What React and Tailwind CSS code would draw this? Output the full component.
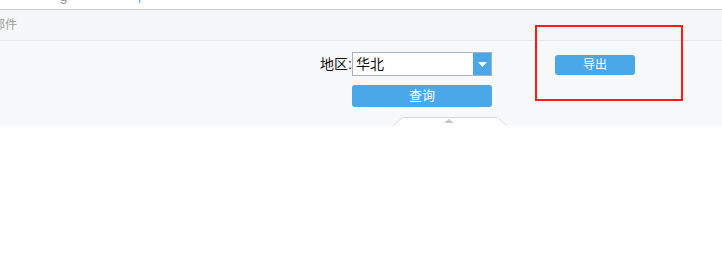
import React from "react";

const FONT = { fontFamily: '"Liberation Sans", "Noto Sans CJK SC", sans-serif' };

function CollapseTab() {
  return (
    <svg width="116" height="9" viewBox="0 0 116 9" className="block">
      <path d="M0.5 9 L10.5 0.5 L105.5 0.5 L115.5 9" fill="#ffffff" stroke="#d9d9d9" />
      <path d="M52 6 L57 2 L62 6 Z" fill="#c8c8c8" />
    </svg>
  );
}

export default function App() {
  return (
    <div className="w-[722px] h-[272px] bg-white relative overflow-hidden text-[14px]" style={FONT}>
      {/* cut-off line above */}
      <div className="h-[9px] overflow-hidden relative border-b border-[#cacaca] box-content">
        <div className="absolute left-[60px] top-[-13px] text-[13px] text-[#888]">g</div>
        <div className="absolute left-[138px] top-[-14px] text-[13px] text-[#4aa8e8]">p</div>
      </div>

      {/* title band */}
      <div className="h-[31px] bg-[#f5f6f8] border-b border-[#e6e7ea] flex items-center">
        <span className="ml-[-7px] text-[12px] text-[#a0a0a0]">邮件</span>
      </div>

      {/* search panel */}
      <div className="h-[85px] bg-[#f7f8fa] flex flex-col">
        <div className="flex pl-[320px] pt-[11px]">
          <div className="flex flex-col w-[172px]">
            <div className="flex items-center h-[24px]">
              <span className="w-[32px] text-[#111]">地区:</span>
              <div className="flex w-[140px] h-[24px] border border-[#aab1c2] bg-white">
                <span className="flex-1 flex items-center pl-[3px] text-[14px] text-[#111]">华北</span>
                <div className="w-[18px] bg-[#4aa8e8] flex items-center justify-center">
                  <svg width="9" height="5" viewBox="0 0 9 5"><path d="M0 0 H9 L4.5 5 Z" fill="#fff" /></svg>
                </div>
              </div>
            </div>
            <button className="ml-[32px] mt-[9px] w-[140px] h-[22px] rounded-[3px] bg-[#4aa8e8] text-white text-[13px] leading-[22px]">
              查询
            </button>
          </div>
          <button className="ml-[63px] mt-[3px] w-[80px] h-[20px] rounded-[3px] bg-[#4aa8e8] text-white text-[12px] leading-[20px]">
            导出
          </button>
        </div>
        <div className="mt-auto pl-[392px]">
          <CollapseTab />
        </div>
      </div>

      {/* annotation box */}
      <div className="absolute left-[535px] top-[25px] w-[148px] h-[76px] border-2 border-[#ff1a1a]" />
    </div>
  );
}
